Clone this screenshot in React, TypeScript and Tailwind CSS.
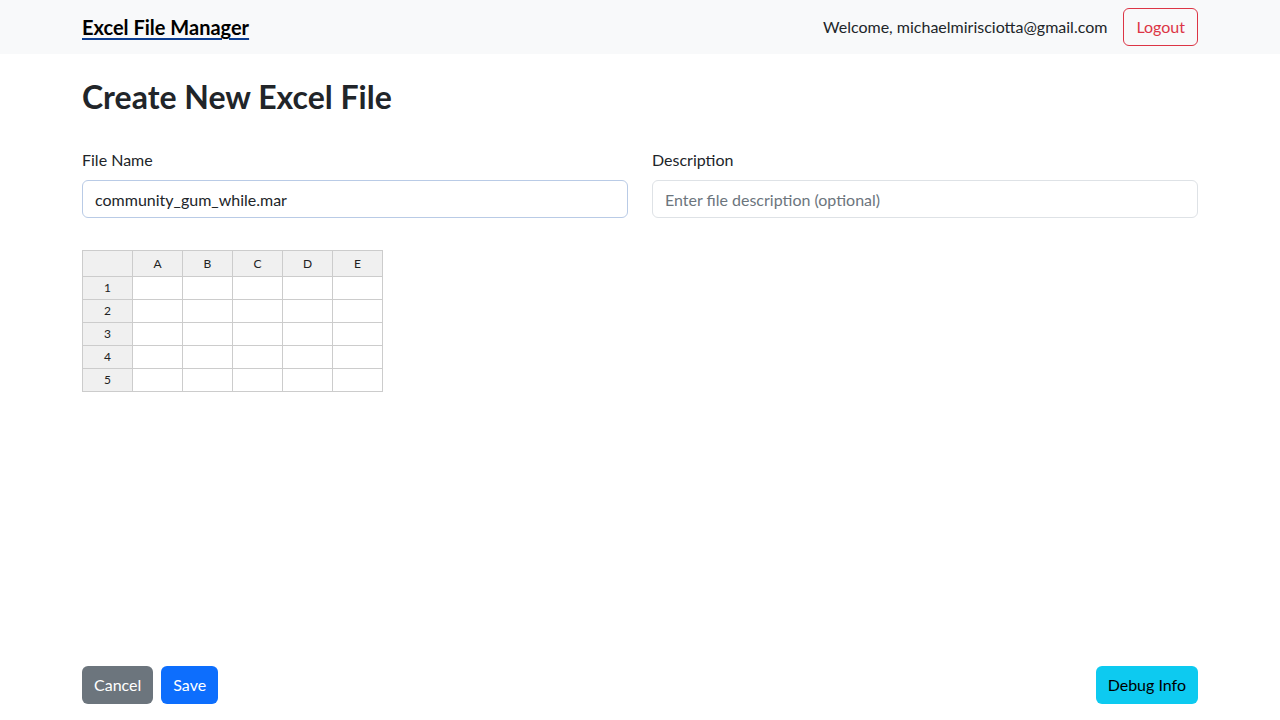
import React from 'react';

const font = { fontFamily: 'Lato, "Noto Sans", sans-serif' };

const cols = ['A', 'B', 'C', 'D', 'E'];
const rows = [1, 2, 3, 4, 5];

const Spreadsheet: React.FC = () => (
  <table className="border-collapse text-[12px] text-[#222]">
    <thead>
      <tr className="h-[26px]">
        <th className="w-[50px] border border-[#ccc] bg-[#f0f0f0] font-normal" />
        {cols.map((c) => (
          <th key={c} className="w-[50px] border border-[#ccc] bg-[#f0f0f0] font-normal">
            {c}
          </th>
        ))}
      </tr>
    </thead>
    <tbody>
      {rows.map((r) => (
        <tr key={r} className="h-[23px]">
          <td className="border border-[#ccc] bg-[#f0f0f0] text-center">{r}</td>
          {cols.map((c) => (
            <td key={c} className="border border-[#ccc] bg-white" />
          ))}
        </tr>
      ))}
    </tbody>
  </table>
);

export default function App() {
  return (
    <div className="flex h-screen flex-col bg-white text-[#212529]" style={font}>
      {/* Navbar */}
      <nav className="h-[54px] bg-[#f8f9fa]">
        <div className="mx-auto flex h-full w-[1140px] items-center justify-between px-3">
          <a className="text-[20px] font-bold text-black underline decoration-[#0b3d91] underline-offset-[3px]">
            Excel File Manager
          </a>
          <div className="flex items-center gap-4">
            <span className="text-[16px]">Welcome, michaelmirisciotta@gmail.com</span>
            <button className="h-[38px] rounded-[6px] border border-[#dc3545] px-3 text-[16px] text-[#dc3545]">
              Logout
            </button>
          </div>
        </div>
      </nav>

      <main className="mx-auto flex w-[1140px] flex-1 flex-col px-3">
        <h2 className="mt-[24px] text-[32px] font-bold leading-[1.2]">Create New Excel File</h2>

        <div className="mt-[32px] grid grid-cols-2 gap-6">
          <div>
            <label className="mb-2 block text-[16px]">File Name</label>
            <input
              className="h-[38px] w-full rounded-[6px] border border-[#b9cbe6] px-3 text-[16px] text-[#212529] outline-none"
              defaultValue="community_gum_while.mar"
            />
          </div>
          <div>
            <label className="mb-2 block text-[16px]">Description</label>
            <input
              className="h-[38px] w-full rounded-[6px] border border-[#dee2e6] px-3 text-[16px] outline-none placeholder:text-[#6c757d]"
              placeholder="Enter file description (optional)"
            />
          </div>
        </div>

        <div className="mt-[32px]">
          <Spreadsheet />
        </div>

        <div className="mt-auto flex items-center justify-between pb-4">
          <div className="flex gap-2">
            <button className="h-[38px] rounded-[6px] bg-[#6c757d] px-3 text-[16px] text-white">Cancel</button>
            <button className="h-[38px] rounded-[6px] bg-[#0d6efd] px-3 text-[16px] text-white">Save</button>
          </div>
          <button className="h-[38px] rounded-[6px] bg-[#0dcaf0] px-3 text-[16px] text-black">Debug Info</button>
        </div>
      </main>
    </div>
  );
}
